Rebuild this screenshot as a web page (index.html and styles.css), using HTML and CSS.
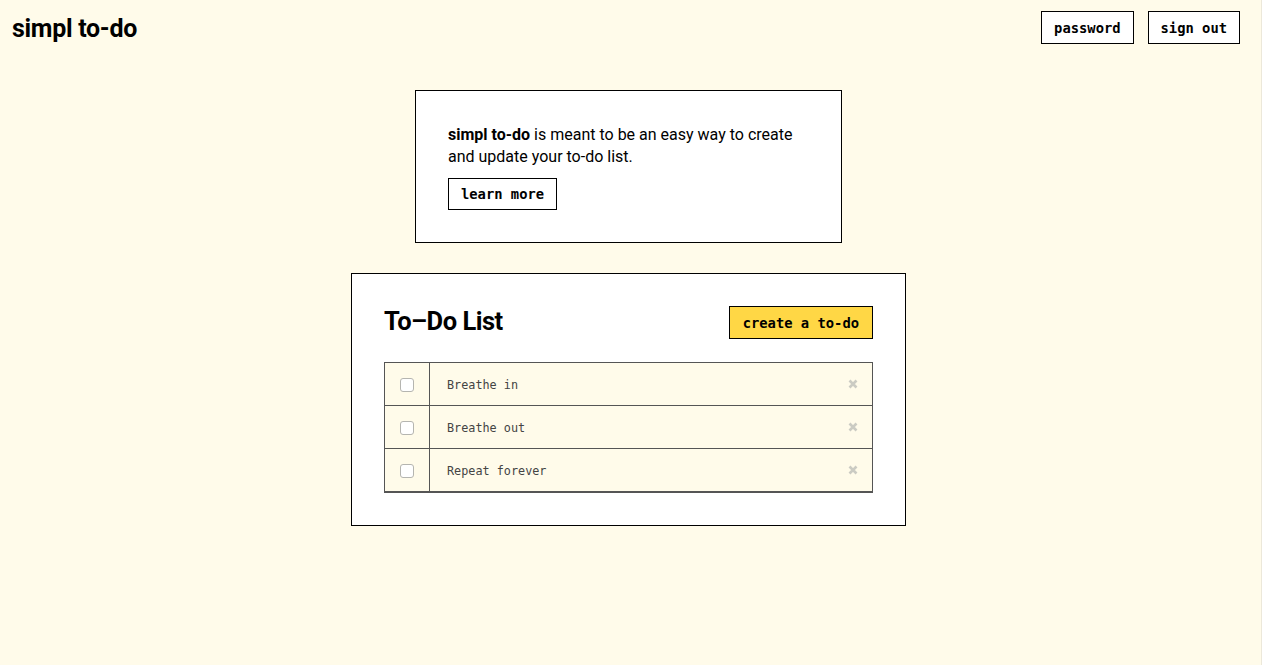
FILE: index.html
```html
<!DOCTYPE html>
<html lang="en">
<head>
<meta charset="utf-8">
<title>simpl to-do</title>
<link rel="stylesheet" href="styles.css">
</head>
<body>
<header class="topbar">
  <div class="brand">simpl to-do</div>
  <nav class="nav">
    <button class="btn">password</button>
    <button class="btn">sign out</button>
  </nav>
</header>
<main class="main">
  <section class="card info">
    <p class="info-text"><strong>simpl to-do</strong> is meant to be an easy way to create and update your to-do list.</p>
    <button class="btn">learn more</button>
  </section>
  <section class="card todo">
    <div class="todo-head">
      <h1 class="todo-title">To–Do List</h1>
      <button class="btn btn-yellow">create a to-do</button>
    </div>
    <ul class="list">
      <li class="row">
        <div class="check-cell"><span class="check"></span></div>
        <div class="text-cell">Breathe in</div>
        <div class="del"><svg width="10" height="10" viewBox="0 0 10 10"><path d="M1.5 1.5 L8.5 8.5 M8.5 1.5 L1.5 8.5" stroke="#cbcbc3" stroke-width="2.6" stroke-linecap="butt"/></svg></div>
      </li>
      <li class="row">
        <div class="check-cell"><span class="check"></span></div>
        <div class="text-cell">Breathe out</div>
        <div class="del"><svg width="10" height="10" viewBox="0 0 10 10"><path d="M1.5 1.5 L8.5 8.5 M8.5 1.5 L1.5 8.5" stroke="#cbcbc3" stroke-width="2.6" stroke-linecap="butt"/></svg></div>
      </li>
      <li class="row">
        <div class="check-cell"><span class="check"></span></div>
        <div class="text-cell">Repeat forever</div>
        <div class="del"><svg width="10" height="10" viewBox="0 0 10 10"><path d="M1.5 1.5 L8.5 8.5 M8.5 1.5 L1.5 8.5" stroke="#cbcbc3" stroke-width="2.6" stroke-linecap="butt"/></svg></div>
      </li>
    </ul>
  </section>
</main>
</body>
</html>
```

FILE: styles.css
```css
* { box-sizing: border-box; }
html, body { height: 100%; }
body {
  margin: 0;
  background: #fffbea;
  font-family: Roboto, "Liberation Sans", sans-serif;
  color: #000;
  border-right: 1px solid #ece8da;
}
.topbar {
  display: flex;
  justify-content: space-between;
  align-items: center;
  padding: 11px 21px 0 12px;
}
.brand {
  font-weight: 700;
  font-size: 25px;
  letter-spacing: -0.3px;
  padding-top: 2px;
}
.nav { display: flex; gap: 14px; }
.btn {
  font-family: "DejaVu Sans Mono", "Liberation Mono", monospace;
  font-weight: 700;
  font-size: 13.8px;
  height: 33px;
  padding: 0 12px;
  border: 1px solid #000;
  background: #fff;
  color: #000;
  border-radius: 0;
  cursor: pointer;
}
.main {
  display: flex;
  flex-direction: column;
  align-items: center;
  gap: 30px;
  margin-top: 46px;
  padding-right: 4px;
}
.card {
  background: #fff;
  border: 1px solid #000;
  padding: 32px;
}
.info { width: 427px; padding-bottom: 32px; }
.info-text {
  margin: 0 0 10px;
  font-size: 16px;
  line-height: 22px;
  padding-top: 1px;
}
.info .btn { height: 32px; padding: 0 12px; }
.todo { width: 555px; padding-bottom: 32px; }
.todo-head {
  display: flex;
  justify-content: space-between;
  align-items: center;
  margin-bottom: 23px;
}
.todo-title {
  margin: 0;
  font-size: 25.5px;
  font-weight: 700;
  letter-spacing: -0.5px;
  position: relative;
  top: -2px;
}
.btn-yellow { background: #ffd745; height: 33px; padding: 0 13px; }
.list {
  list-style: none;
  margin: 0;
  padding: 0;
  border: 1px solid #555;
  border-bottom: 2px solid #555;
  background: #fffbea;
}
.row {
  display: flex;
  align-items: stretch;
  height: 43px;
  border-top: 1px solid #555;
}
.row:first-child { border-top: none; height: 42px; }
.check-cell {
  width: 45px;
  border-right: 1px solid #555;
  display: flex;
  align-items: center;
  justify-content: center;
  padding-top: 1px;
}
.check {
  width: 14px;
  height: 14px;
  border: 1px solid #b5b5b0;
  border-radius: 3px;
  background: #fff;
}
.text-cell {
  flex: 1;
  display: flex;
  align-items: center;
  padding-left: 17px;
  padding-top: 2px;
  font-family: "DejaVu Sans Mono", "Liberation Mono", monospace;
  font-size: 11.8px;
  color: #444;
}
.del {
  width: 40px;
  display: flex;
  align-items: center;
  justify-content: flex-end;
  padding-right: 14px;
}
```
